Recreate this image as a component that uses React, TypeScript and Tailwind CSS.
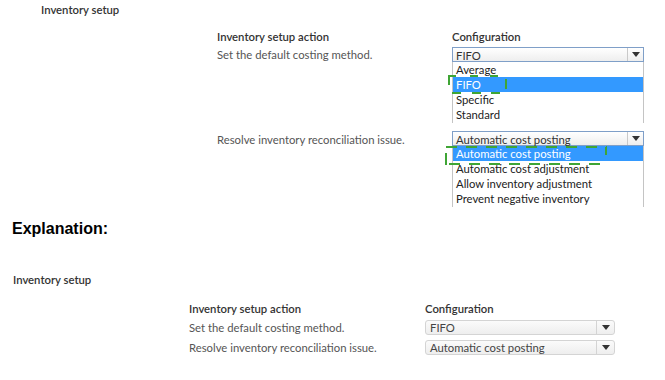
import React from "react";

const font = { fontFamily: "Lato, 'Open Sans', sans-serif" };

function Arrow() {
  return (
    <svg width="8" height="5" viewBox="0 0 8 5">
      <path d="M0 0 L8 0 L4 5 Z" fill="#333" />
    </svg>
  );
}

function TopSelect({ value }: { value: string }) {
  return (
    <div className="flex h-[15px] border border-[#7f9fc8] bg-gradient-to-b from-white to-[#eeeeee]">
      <div className="flex-1 px-[3px] text-[#333] text-[11.3px] leading-[14px] pt-[1px] whitespace-nowrap">
        {value}
      </div>
      <div className="w-[16px] border-l border-[#c9c9c9] flex items-center justify-center">
        <Arrow />
      </div>
    </div>
  );
}

function TopList({ items, selected }: { items: string[]; selected: number }) {
  return (
    <div className="border-x border-[#c4c4c4] bg-white h-[61px] overflow-hidden">
      {items.map((it, i) => (
        <div
          key={it}
          className={
            "h-[15px] leading-[15px] px-[3px] text-[11.3px] whitespace-nowrap " +
            (i === selected ? "bg-[#3399ff] text-white" : "text-[#222]")
          }
        >
          {it}
        </div>
      ))}
    </div>
  );
}

function BottomSelect({ value }: { value: string }) {
  return (
    <div className="flex h-[15px] rounded-[3px] border border-[#d4d4d4] bg-gradient-to-b from-[#fbfbfb] to-[#eeeeee]">
      <div className="flex-1 px-[4px] text-[#444] text-[11.3px] leading-[13px] whitespace-nowrap">
        {value}
      </div>
      <div className="w-[18px] border-l border-[#d4d4d4] flex items-center justify-center">
        <Arrow />
      </div>
    </div>
  );
}

export default function App() {
  return (
    <div className="relative w-[665px] h-[380px] bg-white overflow-hidden text-[11.3px]" style={font}>
      {/* Top section */}
      <div className="h-[20px] pl-[41px] pt-[2px] leading-[15px] font-semibold text-[#333]">Inventory setup</div>
      <div className="ml-[217px] mt-[9px] grid grid-cols-[235px_192px]">
        <div className="h-[15px] leading-[15px] font-semibold text-[#333]">Inventory setup action</div>
        <div className="h-[15px] leading-[15px] font-semibold text-[#333]">Configuration</div>

        <div className="mt-[3px] h-[15px] leading-[15px] text-[#555]">Set the default costing method.</div>
        <div className="mt-[3px]">
          <TopSelect value="FIFO" />
          <TopList items={["Average", "FIFO", "Specific", "Standard"]} selected={1} />
        </div>

        <div className="mt-[8px] pt-[1px] h-[16px] leading-[15px] text-[#555]">Resolve inventory reconciliation issue.</div>
        <div className="mt-[8px]">
          <TopSelect value="Automatic cost posting" />
          <TopList
            items={[
              "Automatic cost posting",
              "Automatic cost adjustment",
              "Allow inventory adjustment",
              "Prevent negative inventory",
            ]}
            selected={0}
          />
        </div>
      </div>

      {/* Explanation */}
      <div
        className="mt-[13px] pl-[12px] h-[18px] leading-[18px] text-[16px] font-bold text-black"
        style={{ fontFamily: "'Liberation Sans', Arial, sans-serif" }}
      >
        Explanation:
      </div>

      {/* Bottom section */}
      <div className="mt-[34px] pl-[13px] h-[15px] leading-[15px] font-semibold text-[#333]">Inventory setup</div>
      <div className="ml-[189px] mt-[14px] grid grid-cols-[236px_190px]">
        <div className="h-[15px] leading-[15px] font-semibold text-[#333]">Inventory setup action</div>
        <div className="h-[15px] leading-[15px] font-semibold text-[#333]">Configuration</div>

        <div className="mt-[4px] h-[15px] leading-[15px] text-[#555]">Set the default costing method.</div>
        <div className="mt-[4px]">
          <BottomSelect value="FIFO" />
        </div>

        <div className="mt-[5px] h-[15px] leading-[15px] text-[#555]">Resolve inventory reconciliation issue.</div>
        <div className="mt-[5px]">
          <BottomSelect value="Automatic cost posting" />
        </div>
      </div>

      {/* Green dashed annotations */}
      <svg className="absolute left-0 top-0 pointer-events-none" width="665" height="380">
        <g stroke="#3fa535" strokeWidth="2" fill="none">
          <path d="M449 85 L449 76 L456 76" />
          <path d="M470 76 L478 76" />
          <path d="M490 76 L498 76" />
          <path d="M506 79 L506 89" />
          <path d="M452 93 L461 93" />
          <path d="M472 93 L481 93" />
          <path d="M491 93 L500 93" />

          <path d="M446 147 L607 147" strokeDasharray="11 9" />
          <path d="M606 147 L606 155" />
          <path d="M446 153 L446 165" />
          <path d="M446 164 L607 164" strokeDasharray="11 9" strokeDashoffset="-3" />
        </g>
      </svg>
    </div>
  );
}
